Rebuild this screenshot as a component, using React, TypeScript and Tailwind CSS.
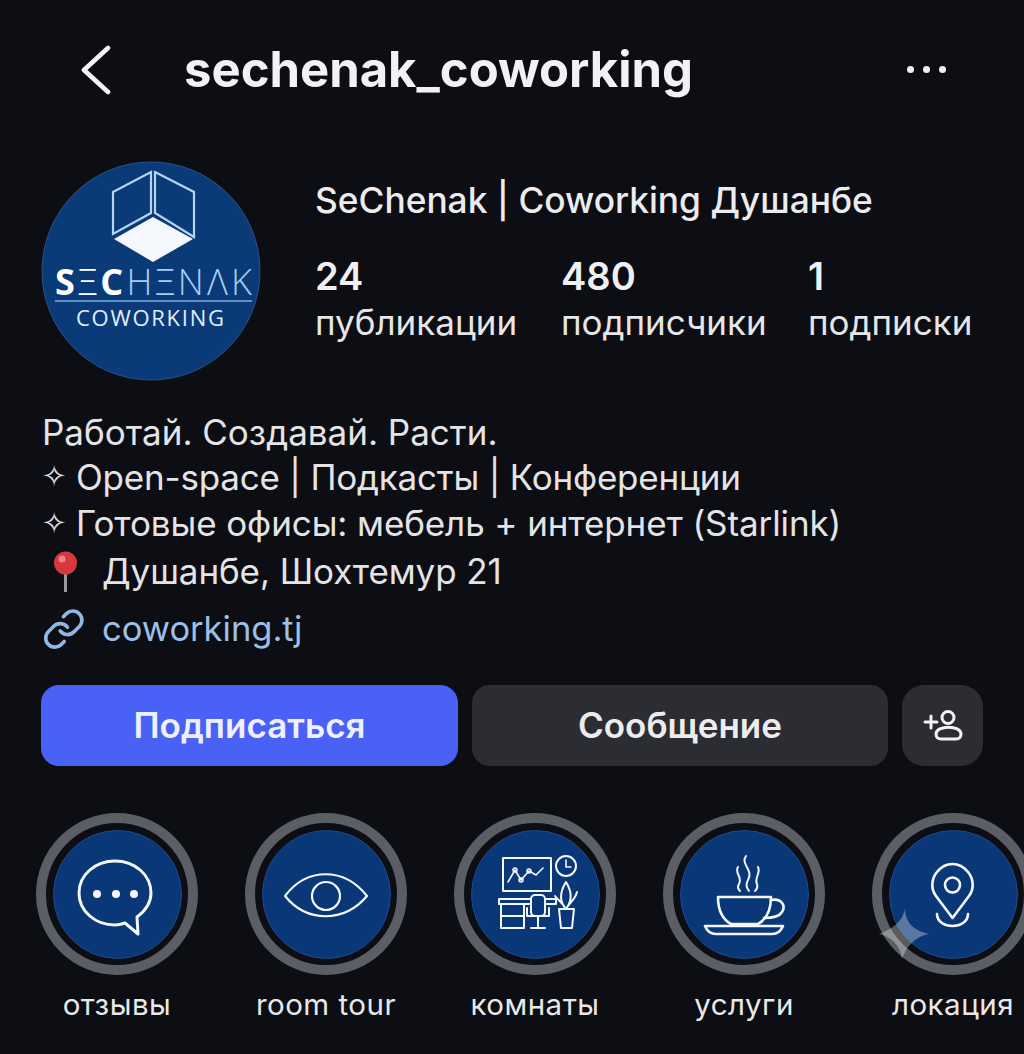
import { ReactNode } from "react";

const font = { fontFamily: "Inter, 'Noto Sans', sans-serif" };
const dingbat = { fontFamily: "'DejaVu Sans', sans-serif" };

const Logo = () => (
    <svg width="240" height="240" viewBox="0 0 240 240" className="shrink-0 -m-[10px]">
        <circle cx="120" cy="121" r="109" fill="#0b3a78" stroke="#2a5288" strokeWidth="1" />
        <g fill="none" stroke="#b4d5f4" strokeWidth="2.2">
            <path d="M82 42 L120 22 V63 L82 84 Z" />
            <path d="M124 22 L163 42 V87 L124 63 Z" />
        </g>
        <path d="M122 67 L162 89 L122 112 L83 89 Z" fill="#f4f8fc" />
        <text x="24" y="145" fontSize="36" fill="#dcecfa" textLength="197" lengthAdjust="spacing" fontWeight="300" fontFamily="'Open Sans', sans-serif">
            <tspan fontWeight="700" fill="#fff">S</tspan>
            <tspan fill="#fff">Ξ</tspan>
            <tspan fontWeight="700" fill="#fff">C</tspan>
            <tspan fill="#a9cdf0">HΞNΛK</tspan>
        </text>
        <line x1="24" y1="151" x2="221" y2="151" stroke="#7fb0e0" strokeWidth="1.4" />
        <text x="45" y="176" fontSize="22" fill="#e0eefa" textLength="148" fontFamily="'Open Sans', sans-serif">COWORKING</text>
    </svg>
);

const Stat = ({ n, label }: { n: string; label: string }) => (
    <div className="flex flex-col">
        <span className="text-[38px] leading-[44px] font-semibold text-[#f0f0f2]">{n}</span>
        <span className="text-[35px] leading-[48px] text-[#e6e6e8] whitespace-nowrap">{label}</span>
    </div>
);

const Disc = ({ children }: { children: ReactNode }) => (
    <div className="w-[162px] h-[162px] rounded-full border-[10px] border-[#5b5e65] flex items-center justify-center shrink-0">
        <svg width="129" height="129" viewBox="0 0 129 129" fill="none" stroke="#f4f7fb" strokeWidth="2.6" strokeLinecap="round" strokeLinejoin="round">
            <circle cx="64.5" cy="64.5" r="64" fill="#0a3777" stroke="#1c4a8a" strokeWidth="1" />
            {children}
        </svg>
    </div>
);

const Highlight = ({ label, children }: { label: string; children: ReactNode }) => (
    <div className="flex flex-col items-center w-[162px] shrink-0">
        <Disc>{children}</Disc>
        <span className="mt-[11px] text-[29.5px] leading-[36px] tracking-[0.5px] text-[#e8e8ea] whitespace-nowrap">{label}</span>
    </div>
);

const App = () => {
    return (
        <div style={font} className="relative w-[1024px] h-[1054px] overflow-hidden bg-[#0c0e13] text-white">
            {/* top bar */}
            <div className="flex items-center h-[139px] pl-[81px] pr-[78px]">
                <svg width="30" height="50" viewBox="0 0 30 50" fill="none" stroke="#f5f5f5" strokeWidth="4.6" strokeLinecap="round" strokeLinejoin="round" className="shrink-0">
                    <path d="M27 3 L3 25 L27 47" />
                </svg>
                <h1 className="ml-[73px] text-[49px] leading-[56px] font-bold text-[#f2f2f4]">sechenak_coworking</h1>
                <div className="ml-auto flex gap-[9px]">
                    <span className="w-[7px] h-[7px] rounded-full bg-[#f0f0f0]" />
                    <span className="w-[7px] h-[7px] rounded-full bg-[#f0f0f0]" />
                    <span className="w-[7px] h-[7px] rounded-full bg-[#f0f0f0]" />
                </div>
            </div>

            {/* profile */}
            <div className="flex mt-[21px] pl-[41px]">
                <div className="w-[220px] h-[220px] flex items-center justify-center shrink-0">
                    <Logo />
                </div>
                <div className="ml-[54px] pt-[19px]">
                    <div className="text-[35.3px] leading-[44px] font-medium text-[#ececee] whitespace-nowrap">SeChenak | Coworking Душанбе</div>
                    <div className="flex mt-[31px]">
                        <div className="w-[246px]"><Stat n="24" label="публикации" /></div>
                        <div className="w-[247px]"><Stat n="480" label="подписчики" /></div>
                        <Stat n="1" label="подписки" />
                    </div>
                </div>
            </div>

            {/* bio */}
            <div className="mt-[30px] pl-[42px] text-[35px] text-[#e4e4e6]">
                <div className="h-[44px] leading-[44px]">Работай. Создавай. Расти.</div>
                <div className="flex items-center h-[46px] tracking-[-0.2px]"><span className="w-[34px] text-[29px]" style={dingbat}>✧</span>Open-space | Подкасты | Конференции</div>
                <div className="flex items-center h-[47px] tracking-[-0.1px]"><span className="w-[34px] text-[29px]" style={dingbat}>✧</span>Готовые офисы: мебель + интернет (Starlink)</div>
                <div className="flex items-center h-[48px] tracking-[-0.1px]">
                    <svg width="60" height="42" viewBox="0 0 60 42" className="shrink-0">
                        <rect x="22" y="20" width="3" height="22" fill="#9a9a9e" />
                        <circle cx="23.5" cy="13" r="11.5" fill="#d8373f" />
                        <circle cx="20" cy="9" r="3.5" fill="#f08088" />
                    </svg>
                    Душанбе, Шохтемур 21
                </div>
                <div className="flex items-center mt-[11px] h-[46px] text-[34.5px] text-[#9cc0ea]">
                    <svg width="60" height="42" viewBox="0 0 33 23.1" fill="none" stroke="#8fb6e4" strokeWidth="2" strokeLinecap="round" strokeLinejoin="round" className="shrink-0">
                        <g transform="translate(0 -0.4)">
                            <path d="M10 13a5 5 0 0 0 7.54.54l3-3a5 5 0 0 0-7.07-7.07l-1.72 1.71" />
                            <path d="M14 11a5 5 0 0 0-7.54-.54l-3 3a5 5 0 0 0 7.07 7.07l1.71-1.71" />
                        </g>
                    </svg>
                    coworking.tj
                </div>
            </div>

            {/* buttons */}
            <div className="flex gap-[14px] mt-[33px] pl-[41px] text-[35px] font-semibold">
                <button className="w-[417px] h-[81px] rounded-[18px] bg-[#4a61f5] text-[#eef0ff]">Подписаться</button>
                <button className="w-[416px] h-[81px] rounded-[18px] bg-[#2b2d33] text-[#ececee]">Сообщение</button>
                <button className="w-[81px] h-[81px] rounded-[22px] bg-[#2b2d33] flex items-center justify-center">
                    <svg width="40" height="31" viewBox="0 0 40 31" fill="none" stroke="#f2f2f2" strokeWidth="3" strokeLinecap="round">
                        <path d="M2 12 H14 M8 6 V18" />
                        <circle cx="25" cy="7.5" r="6" />
                        <path d="M13 24 C13 15 38 15 38 24 C38 27 36 29 33 29 H18 C15 29 13 27 13 24 Z" />
                    </svg>
                </button>
            </div>

            {/* highlights */}
            <div className="flex gap-[47px] mt-[47px] pl-[36px] w-[1100px]">
                <Highlight label="отзывы">
                    <g strokeWidth="3">
                        <path d="M62 31 C42 31 26 45 26 63 C26 81 42 95 62 95 C66 95 69 94 72 93 L85 104 L84 87 C92 81 98 73 98 63 C98 45 82 31 62 31 Z" />
                    </g>
                    <circle cx="44" cy="64" r="4" fill="#f4f7fb" stroke="none" />
                    <circle cx="63" cy="64" r="4" fill="#f4f7fb" stroke="none" />
                    <circle cx="81" cy="64" r="4" fill="#f4f7fb" stroke="none" />
                </Highlight>
                <Highlight label="room tour">
                    <g strokeWidth="2.2">
                        <path d="M23 66 C45 37 82 37 105 66 C82 93 45 93 23 66 Z" />
                        <circle cx="64" cy="66" r="14" />
                    </g>
                </Highlight>
                <Highlight label="комнаты">
                    <g strokeWidth="2">
                        <rect x="32" y="28" width="48" height="33" />
                        <path d="M37 52 L44 40 L50 50 L58 41 L65 45 L72 38" strokeWidth="1.6" />
                        <circle cx="44" cy="40" r="2" strokeWidth="1.5" />
                        <circle cx="50" cy="50" r="2" strokeWidth="1.5" />
                        <circle cx="58" cy="41" r="2" strokeWidth="1.5" />
                        <circle cx="95" cy="36" r="10" />
                        <path d="M95 30 V37 H100" strokeWidth="1.6" />
                        <path d="M28 69 H85 V74 H28 Z" />
                        <path d="M30 74 V98 H53 V74 M30 86 H53" />
                        <rect x="60" y="65" width="14" height="21" rx="4" fill="#0a3777" />
                        <path d="M56 78 V86 H78 V78 M67 86 V98 M60 98 H74" />
                        <path d="M88 79 H103 L101 98 H90 Z" fill="#0a3777" />
                        <path d="M95 79 C87 70 90 60 95 52 C100 60 102 70 95 79 M95 79 C91 72 87 70 84 66 M95 79 C99 72 104 70 106 62" />
                    </g>
                </Highlight>
                <Highlight label="услуги">
                    <path d="M38 67 H91 C91 80 87 89 78 94 H51 C42 89 38 80 38 67 Z" />
                    <path d="M91 70 C102 68 106 76 102 82 C99 87 92 88 84 88" />
                    <path d="M25 96 H103 C101 101 97 104 92 104 H36 C31 104 27 101 25 96 Z" />
                    <path d="M66 26 C60 34 74 40 68 50 C65 55 67 58 69 61" strokeWidth="2" />
                    <path d="M58 37 C54 43 63 47 59 54 C57 57 58 59 60 61" strokeWidth="2" />
                    <path d="M78 37 C81 43 74 48 77 54 C78 57 77 59 75 61" strokeWidth="2" />
                </Highlight>
                <Highlight label="локация">
                    <path d="M63.5 88 L47 66 C41 58 43 48 48 42 C52 37 58 34 63.5 34 C69 34 75 37 79 42 C84 48 86 58 80 66 Z" />
                    <circle cx="63.5" cy="55" r="7.5" />
                    <path d="M48 84 C48 92 56 96 63.5 96 C71 96 79 92 79 84" />
                </Highlight>
            </div>

            {/* sparkle watermark */}
            <svg width="50" height="50" viewBox="0 0 50 50" className="absolute left-[879px] top-[909px]">
                <path d="M26 0 C27 14 34 21 50 25 C36 28 28 36 23 50 C21 36 13 28 0 25 C14 20 23 13 26 0 Z" fill="#ffffff" fillOpacity="0.32" />
            </svg>
        </div>
    );
};

export default App;
